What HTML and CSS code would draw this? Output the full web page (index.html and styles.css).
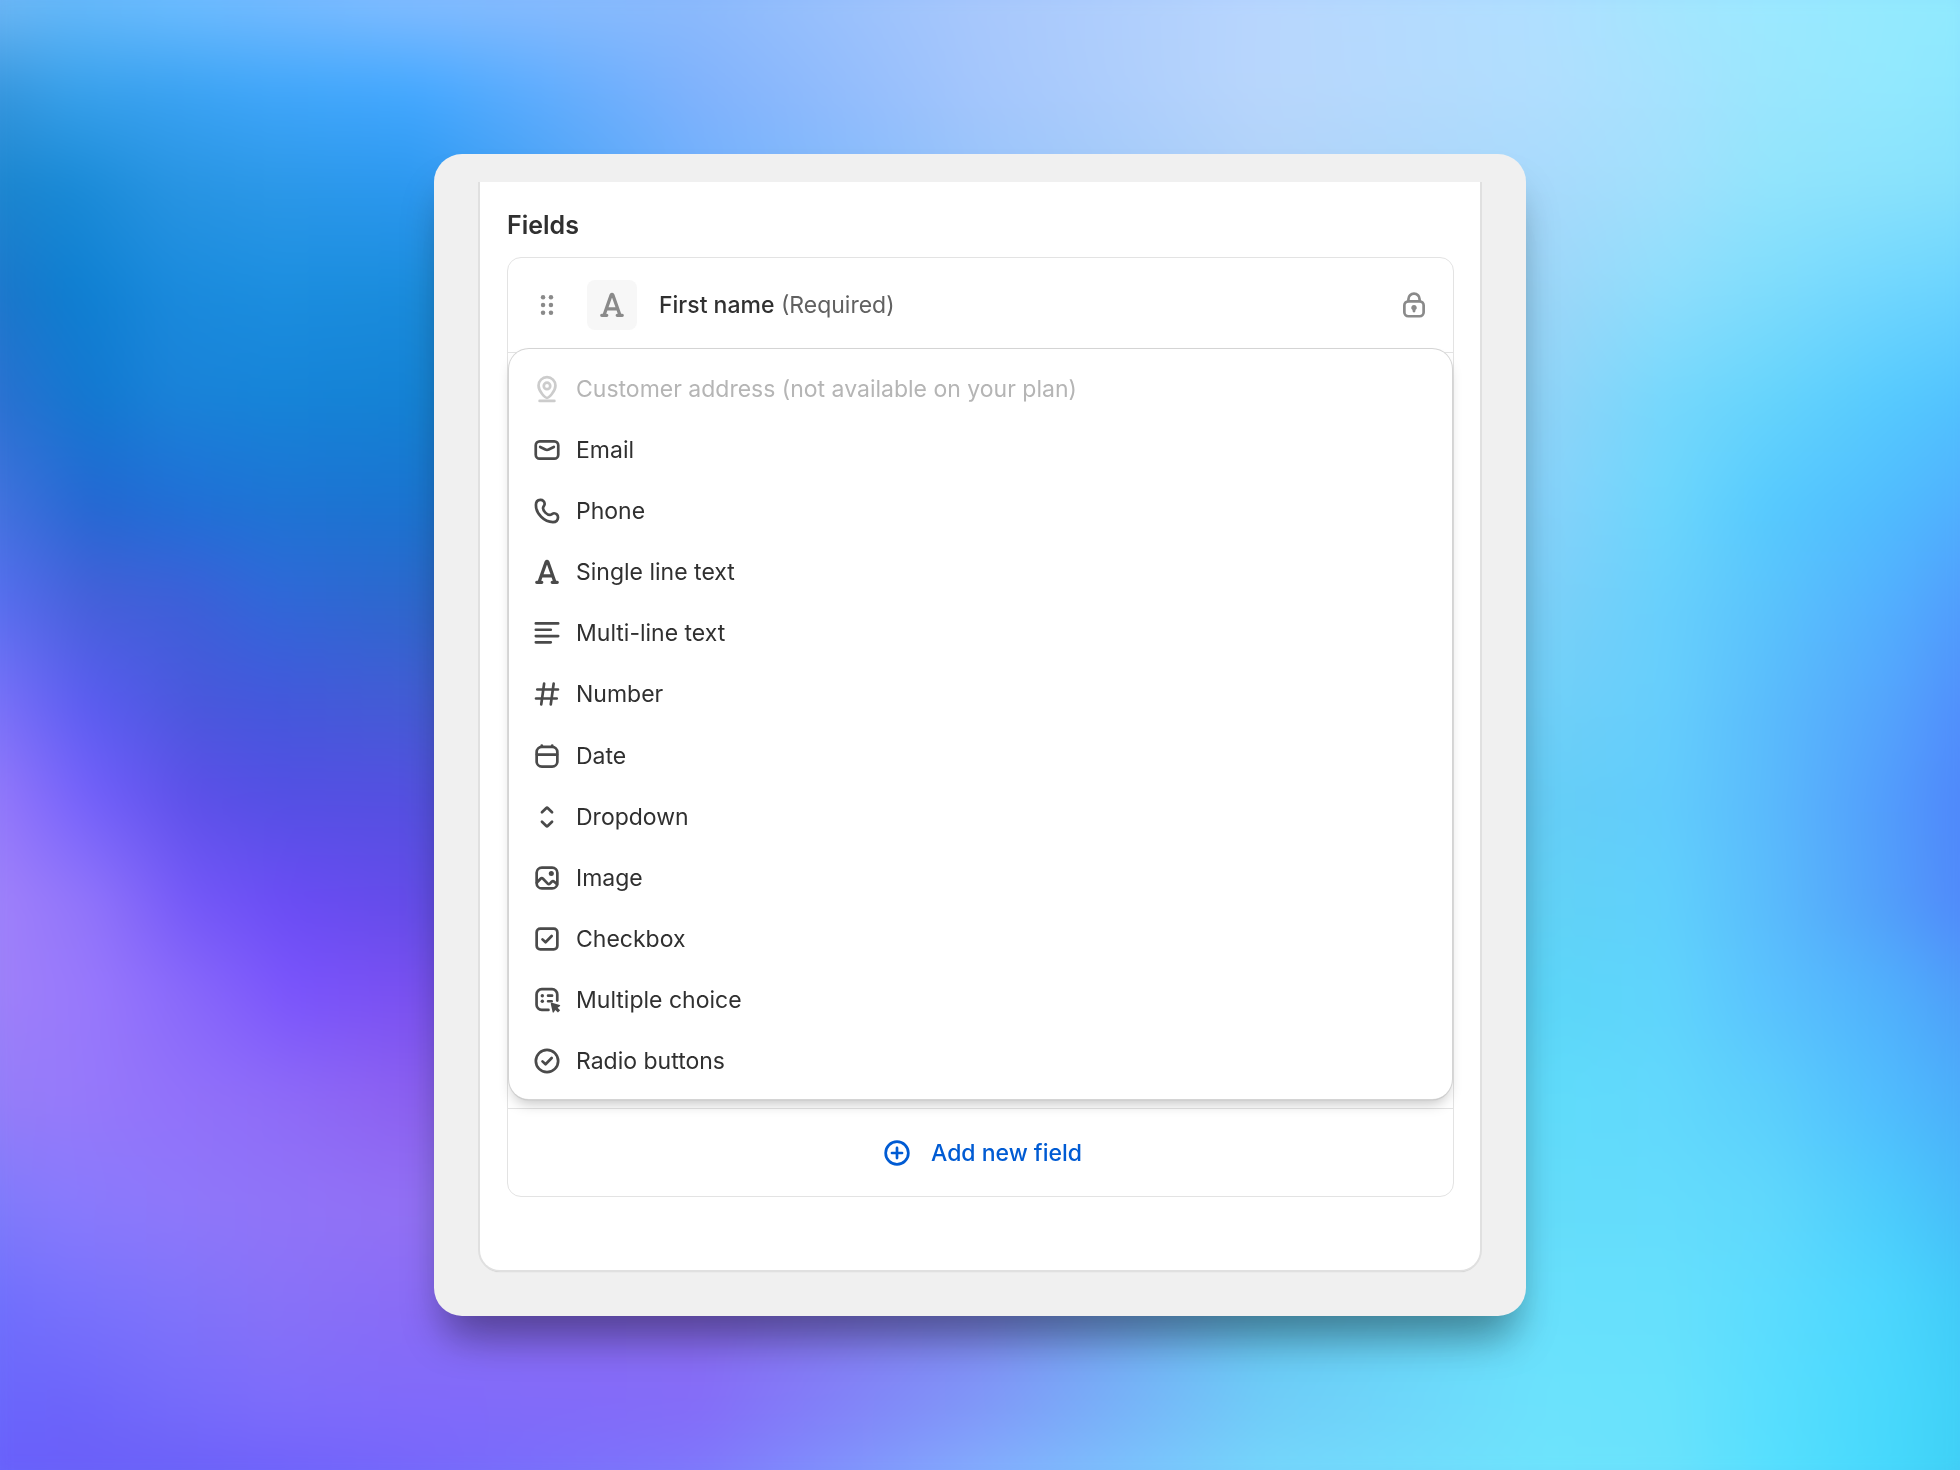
FILE: index.html
```html
<!DOCTYPE html>
<html lang="en">
<head>
<meta charset="utf-8">
<meta name="viewport" content="width=device-width, initial-scale=1">
<title>Fields</title>
<link rel="stylesheet" href="styles.css">
</head>
<body>
<svg class="symbols" aria-hidden="true">
  <symbol id="i-text" viewBox="0 0 20 20"><path d="M5.6 15.6 9.5 4.5q.5-.8 1 0l3.9 11.1M7 12.1h6M4.3 15.7h2.8M12.9 15.7h2.8"/></symbol>
</svg>
<div class="wash" aria-hidden="true">
  <div class="band band-0"></div><div class="band band-1"></div><div class="band band-2"></div><div class="band band-3"></div>
  <div class="band band-4"></div><div class="band band-5"></div><div class="band band-6"></div><div class="band band-7"></div>
  <div class="band band-8"></div><div class="band band-9"></div><div class="band band-10"></div><div class="band band-11"></div>
  <div class="band band-12"></div><div class="band band-13"></div><div class="band band-14"></div><div class="band band-15"></div>
</div>
<main class="panel">
  <section class="card" aria-labelledby="fields-title">
    <h2 class="card-title" id="fields-title">Fields</h2>
    <div class="field-list">
      <div class="field-row">
        <svg class="icon icon-muted icon-solid" viewBox="0 0 20 20" aria-hidden="true"><circle cx="7.8" cy="5.7" r="1.25"/><circle cx="12.2" cy="5.7" r="1.25"/><circle cx="7.8" cy="10" r="1.25"/><circle cx="12.2" cy="10" r="1.25"/><circle cx="7.8" cy="14.3" r="1.25"/><circle cx="12.2" cy="14.3" r="1.25"/></svg>
        <span class="tile"><svg class="icon icon-muted icon-heavy" aria-hidden="true"><use href="#i-text"/></svg></span>
        <p class="field-name"><strong class="field-label">First name</strong> <span class="field-note">(Required)</span></p>
        <svg class="icon icon-muted" viewBox="0 0 20 20" aria-hidden="true"><rect x="4.65" y="7.95" width="10.7" height="8.3" rx="2.2"/><path d="M6.9 7.7V6.8a3.1 3.1 0 0 1 6.2 0v.9"/><path class="fill" d="M10 10a1.5 1.5 0 0 1 .8 2.8v.6a.8.8 0 0 1-1.6 0v-.6A1.5 1.5 0 0 1 10 10Z"/></svg>
      </div>
      <ul class="menu">
        <li><button class="menu-item" type="button" disabled><svg class="icon" viewBox="0 0 20 20" aria-hidden="true"><path d="M10 14.9c.9 0 4.7-3.4 4.7-6.8a4.7 4.7 0 0 0-9.4 0c0 3.4 3.8 6.8 4.7 6.8Z"/><circle cx="10" cy="8.3" r="1.8"/><path d="M5.9 16.6h8.2"/></svg>Customer address (not available on your plan)</button></li>
        <li><button class="menu-item" type="button"><svg class="icon" viewBox="0 0 20 20" aria-hidden="true"><rect x="3.75" y="5.2" width="12.5" height="9.6" rx="2.2"/><path d="m6.2 8.3 2.9 1.4q.9.4 1.8 0l2.9-1.4"/></svg>Email</button></li>
        <li><button class="menu-item" type="button"><svg class="icon" viewBox="0 0 20 20" aria-hidden="true"><path d="M6.3 3.85c1.3-.1 2.4.9 2.4 2.2 0 .9-.9 1.4-.9 2.3 0 1.7 2.1 3.8 3.8 3.8.9 0 1.4-.9 2.3-.9 1.3 0 2.3 1.1 2.2 2.4-.1 1.5-1.2 2.5-2.8 2.5-4.9 0-9.45-4.65-9.45-9.45 0-1.6.95-2.75 2.45-2.85Z"/></svg>Phone</button></li>
        <li><button class="menu-item" type="button"><svg class="icon icon-heavy" aria-hidden="true"><use href="#i-text"/></svg>Single line text</button></li>
        <li><button class="menu-item" type="button"><svg class="icon" viewBox="0 0 20 20" aria-hidden="true"><path d="M3.8 4.7h12.4M3.8 8.2h8.3M3.8 11.7h12.4M3.8 15.2h8.3"/></svg>Multi-line text</button></li>
        <li><button class="menu-item" type="button"><svg class="icon" viewBox="0 0 20 20" aria-hidden="true"><path d="M4.6 7.5h11.5M3.9 12.5h11.5M8.4 4.2 6.8 15.8M13.7 4.2l-1.6 11.6"/></svg>Number</button></li>
        <li><button class="menu-item" type="button"><svg class="icon" viewBox="0 0 20 20" aria-hidden="true"><rect x="4.25" y="4.9" width="11.5" height="11" rx="2.9"/><path d="M4.4 9.2h11.2M7.1 4.2v.5M12.9 4.2v.5"/></svg>Date</button></li>
        <li><button class="menu-item" type="button"><svg class="icon" viewBox="0 0 20 20" aria-hidden="true"><path d="m7.2 7.4 2.3-2.3q.5-.5 1 0l2.3 2.3M7.2 12.6l2.3 2.3q.5.5 1 0l2.3-2.3"/></svg>Dropdown</button></li>
        <li><button class="menu-item" type="button"><svg class="icon" viewBox="0 0 20 20" aria-hidden="true"><rect x="4.25" y="4.25" width="11.5" height="11.5" rx="2.9"/><path d="m4.4 12.6 2-2.2q.7-.7 1.4 0l2.6 2.7q.6.6 1.2 0l1-1q.7-.7 1.4 0l1.6 1.4"/><circle class="fill" cx="12.4" cy="7.5" r="1.4"/></svg>Image</button></li>
        <li><button class="menu-item" type="button"><svg class="icon" viewBox="0 0 20 20" aria-hidden="true"><rect x="4.25" y="4.25" width="11.5" height="11.5" rx="2"/><path d="m7.5 10.2 1.7 1.6 3.4-3.5"/></svg>Checkbox</button></li>
        <li><button class="menu-item" type="button"><svg class="icon" viewBox="0 0 20 20" aria-hidden="true"><path d="M10.8 15.5H7.1a2.9 2.9 0 0 1-2.9-2.9V6.9A2.9 2.9 0 0 1 7.1 4h5.7a2.9 2.9 0 0 1 2.9 2.9v3.4"/><path d="M10.6 7.6h2.2M10.6 10.7h2"/><circle class="fill" cx="7.4" cy="7.6" r=".95"/><circle class="fill" cx="7.4" cy="10.7" r=".95"/><path class="fill" d="M12.8 11.5 17.1 12.8q.6.3 0 .7l-1.2.8 1.4 1.4-1.2 1.2-1.5-1.4-.8 1.3q-.5.5-.7-.1L12.1 12.2q-.1-.8.7-.7Z"/></svg>Multiple choice</button></li>
        <li><button class="menu-item" type="button"><svg class="icon" viewBox="0 0 20 20" aria-hidden="true"><circle cx="10" cy="10" r="6.2"/><path d="m7.5 10.2 1.7 1.6 3.4-3.5"/></svg>Radio buttons</button></li>
      </ul>
      <button class="add-button" type="button"><svg class="icon" viewBox="0 0 20 20" aria-hidden="true"><circle cx="10" cy="10" r="6.3"/><path d="M10 7.2v5.6M7.2 10h5.6"/></svg>Add new field</button>
    </div>
  </section>
</main>
</body>
</html>
```
FILE: styles.css
```css
* { box-sizing: border-box; }

body {
  margin: 0;
  min-height: 100vh;
  display: grid;
  place-items: center;
  font-family: Inter, "Liberation Sans", sans-serif;
  font-size: 23px;
  line-height: 32px;
  color: #303030;
  background: #6a9cf8;
}

.symbols { position: absolute; width: 0; height: 0; }

/* Backdrop: horizontal gradients, each fading into the next one down */
.wash { position: fixed; inset: -30px; z-index: -1; display: grid; overflow: hidden; filter: blur(18px); }
.band { grid-area: 1 / 1; -webkit-mask-image: linear-gradient(transparent var(--from), #000 var(--to)); mask-image: linear-gradient(transparent var(--from), #000 var(--to)); }
.band-0 { --from: -2%; --to: -1%; background: linear-gradient(90deg, #70b8f4, #66b9fa 5%, #6cbcff 10%, #74bbff 15%, #82bcff 22%, #8cbafc 36%, #a8c8fc 50%, #b8d6fe 64%, #b0e0ff 78%, #a4e6fe 84%, #9ce9ff 89%, #94eafe 95%, #90eafe); }
.band-1 { --from: 2%; --to: 8%; background: linear-gradient(90deg, #3492d8, #38a0ea 5%, #3aa2f2 10%, #40a6fa 15%, #44a8ff 22%, #80b2fc 36%, #a4c6fc 50%, #b8d6fc 64%, #b0defe 78%, #a6e2fe 84%, #9ae6fd 89%, #92e8fe 95%, #8ae6fe); }
.band-2 { --from: 8%; --to: 14%; background: linear-gradient(90deg, #1c84cc, #1a8ad6 5%, #2894e2 10%, #2c98e8 15%, #2c98f0 22%, #70b0fc 36%, #98c4fa 50%, #b0d2f8 64%, #a8dafc 78%, #a0e0fc 84%, #92e4fc 89%, #8ae2fc 95%, #84e0fc); }
.band-3 { --from: 14%; --to: 21%; background: linear-gradient(90deg, #2074c8, #0e7ed0 5%, #1a8adc 10%, #1c8edf 15%, #1a8cdc 22%, #9cd6f8 78%, #8edefc 84%, #7edcfc 89%, #70d6fe 95%, #68d2fe); }
.band-4 { --from: 21%; --to: 28%; background: linear-gradient(90deg, #306ed0, #1278d0 6%, #1a82d8 10%, #1684d8 15%, #1482d4 22%, #90d4f8 78%, #76d8fc 84%, #66d4fc 89%, #56cafe 95%, #50c0fe); }
.band-5 { --from: 28%; --to: 35%; background: linear-gradient(90deg, #4a74e0, #2468d2 6%, #2070d6 11%, #1e74d4 15%, #1a74d0 22%, #86d2fa 78%, #6cd6fc 84%, #56cafe 89%, #50bcfe 95%, #50acfe); }
.band-6 { --from: 35%; --to: 41%; background: linear-gradient(90deg, #5c72f4, #4460d8 6%, #3c60d8 11%, #3068d8 15%, #2c68cc 22%, #7cd0f8 78%, #68d0fc 84%, #5ac4fc 89%, #52b0fe 95%, #5098fc); }
.band-7 { --from: 41%; --to: 48%; background: linear-gradient(90deg, #8276fa, #5a5cf0 6%, #4a58dc 11%, #4458dc 15%, #445cd4 22%, #70d0f8 78%, #66cefc 84%, #5abcfc 89%, #54a4fc 95%, #5088fc); }
.band-8 { --from: 48%; --to: 54%; background: linear-gradient(90deg, #9c7efa, #7260fa 6%, #5c50e8 11%, #5450e4 15%, #5450e0 22%, #66cef6 78%, #62ccfc 84%, #5abafc 89%, #529cfc 95%, #4e80fa); }
.band-9 { --from: 54%; --to: 61%; background: linear-gradient(90deg, #a484fa, #9074fa 6%, #7458f8 11%, #6a4cf4 16%, #644ce8 22%, #62d2f6 78%, #60d0fc 84%, #5abcfc 89%, #529efa 95%, #5082fa); }
.band-10 { --from: 61%; --to: 67%; background: linear-gradient(90deg, #a082f8, #9878fc 6%, #8868fa 11%, #7a54fc 16%, #7a50f0 22%, #5cd6f8 78%, #60d4fc 84%, #5ac2fe 89%, #50b0fc 95%, #4e98f8); }
.band-11 { --from: 67%; --to: 74%; background: linear-gradient(90deg, #947ef8, #967afa 5%, #9272fa 10%, #8e6cf8 15%, #8c60f0 22%, #60dcfa 78%, #62d8fc 84%, #5ccffc 89%, #50bcfe 95%, #4aaaf8); }
.band-12 { --from: 74%; --to: 81%; background: linear-gradient(90deg, #7c7afa, #887afc 5%, #8e78fa 10%, #9074f8 15%, #9270f4 22%, #64dcfa 78%, #64dcfc 84%, #60d8fc 89%, #4cccfc 95%, #46b8f8); }
.band-13 { --from: 81%; --to: 87%; background: linear-gradient(90deg, #6e6efc, #7872fc 5%, #8074fa 10%, #8872f8 15%, #8a6cf6 22%, #8c6cf0 36%, #8088f0 50%, #64c8f0 64%, #68e0fc 78%, #66e0fc 84%, #5cdcfe 89%, #4cd6fe 95%, #3ec8f6); }
.band-14 { --from: 87%; --to: 94%; background: linear-gradient(90deg, #6a66fc, #6c64fa 5%, #746afa 10%, #7c6cfa 15%, #806afa 22%, #846cf8 36%, #8098f8 50%, #70ccf8 64%, #6ce2fc 78%, #68e2fc 84%, #58defe 89%, #48d8fc 95%, #3ecef6); }
.band-15 { --from: 94%; --to: 99%; background: linear-gradient(90deg, #685efc, #6a5ef8 5%, #6a5ff8 10%, #6e60fa 15%, #7466fa 22%, #7e7afc 36%, #84b0fe 50%, #76d8fc 64%, #6ee4fc 78%, #6ae2fc 84%, #56e0fe 89%, #46d8fc 95%, #3ccef2); }

.panel {
  width: min(1092px, 100%);
  padding: 28px 46px 46px;
  border-radius: 28px;
  background: #f0f0f0;
  box-shadow: 0 30px 40px -10px rgba(0, 0, 0, .36), 0 40px 60px -30px rgba(0, 0, 0, .1);
}

/* The card is cut off at its top edge, so its outline shows on three sides */
.card {
  padding: 27px 26px 73px 27px;
  border-radius: 0 0 20px 20px;
  background: #fff;
  box-shadow: 0 0 0 2px #e0e0e0, 0 2px 1px rgba(0, 0, 0, .2);
  clip-path: inset(0 -4px -6px -4px);
}
.card-title { margin: 0 0 16px; font-size: 25px; font-weight: 600; line-height: 32px; }

.field-list { border: 1px solid #e3e3e3; border-radius: 14px; }
.field-row { display: flex; align-items: center; gap: 22px; padding: 22px 21px; border-bottom: 1px solid #e3e3e3; }
.field-name { flex: 1; margin: 0; }
.field-label { font-weight: 550; }
.field-note { color: #616161; }
.tile { display: grid; place-items: center; width: 50px; height: 50px; border-radius: 8px; background: #f7f7f7; }

.icon { flex: none; display: block; width: 36px; height: 36px; fill: none; stroke: currentColor; stroke-width: 1.5; stroke-linecap: round; stroke-linejoin: round; color: #4a4a4a; }
.icon-muted { color: #8a8a8a; }
.icon-solid { fill: currentColor; stroke: none; }
.icon-heavy { stroke-width: 1.8; }
.fill { fill: currentColor; stroke: none; }

.menu {
  position: relative;
  display: grid;
  grid-auto-rows: 1fr;
  min-height: 750px;
  margin: -4px 1px 9px;
  padding: 9px 0 7px;
  list-style: none;
  border-radius: 20px;
  background: #fff;
  box-shadow: 0 0 0 1px #d4d4d4, 0 1px 1px rgba(0, 0, 0, .25), 0 8px 14px -4px rgba(0, 0, 0, .25);
}
.menu-item {
  display: flex;
  align-items: center;
  gap: 11px;
  width: 100%;
  height: 100%;
  padding: 0 20px;
  border: 0;
  background: none;
  font: inherit;
  color: inherit;
  text-align: left;
}
.menu-item:disabled { color: #b5b5b5; }
.menu-item:disabled .icon { color: #ccc; }

.add-button {
  display: flex;
  align-items: center;
  justify-content: center;
  gap: 16px;
  width: 100%;
  height: 88px;
  padding: 0;
  border: 0;
  border-top: 1px solid #e3e3e3;
  background: none;
  font: inherit;
  font-weight: 550;
  color: #005bd3;
}
.add-button .icon { color: inherit; }
```
